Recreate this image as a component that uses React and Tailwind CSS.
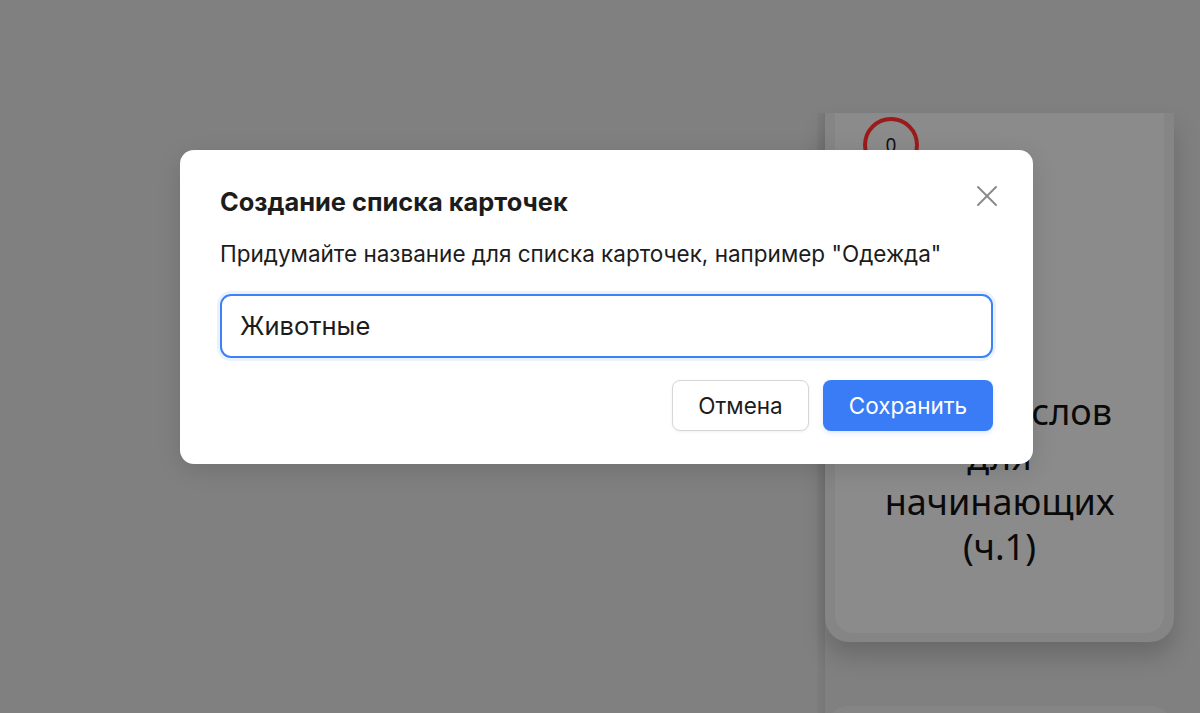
import React from 'react';

function CloseIcon() {
  return (
    <svg width="22" height="22" viewBox="0 0 22 22" fill="none" stroke="#8a8a8a" strokeWidth="2" strokeLinecap="round">
      <line x1="2" y1="2" x2="20" y2="20" />
      <line x1="20" y1="2" x2="2" y2="20" />
    </svg>
  );
}

function BackgroundCard() {
  return (
    <div className="shrink-0 w-[349px] h-[529px] bg-[#858585] rounded-b-[24px] px-[10px] pb-[9px] shadow-[0_14px_24px_rgba(0,0,0,0.18)]">
      <div className="h-full bg-[#8b8b8b] rounded-b-[18px] flex flex-col">
        <div className="pl-[28px] pt-[4px]">
          <div className="w-[56px] h-[56px] rounded-full border-[4px] border-[#9a1b1b] flex items-center justify-center text-[19px] text-[#111] font-['Noto_Sans',sans-serif]">
            0
          </div>
        </div>
        <div className="mt-[216px] text-center text-[36px] leading-[45px] text-[#0a0a0a] font-['Noto_Sans',sans-serif]">
          Топ-100 слов
          <br />
          для
          <br />
          начинающих
          <br />
          (ч.1)
        </div>
      </div>
    </div>
  );
}

export default function App() {
  return (
    <div className="relative w-full h-[713px] overflow-hidden bg-[#808080] font-['Inter',sans-serif]">
      {/* page behind the overlay */}
      <div className="flex h-full">
        <div className="flex-1" />
        <div className="w-[383px] pt-[113px] flex">
          <div className="w-[8px] h-full bg-gradient-to-r from-[#7d7d7d] to-[#777777]" />
          <div className="flex flex-col gap-[64px]">
            <BackgroundCard />
            <div className="shrink-0 w-[349px] h-[40px] bg-[#858585] rounded-t-[24px] px-[10px] pt-[9px]">
              <div className="h-full bg-[#8b8b8b] rounded-t-[18px]" />
            </div>
          </div>
        </div>
      </div>

      {/* modal */}
      <div className="absolute left-[180px] top-[150px] w-[853px] bg-white rounded-[14px] px-[40px] pt-[36px] pb-[33px] shadow-[0_6px_24px_rgba(0,0,0,0.12)]">
        <div className="flex items-start justify-between">
          <h2 className="text-[25.4px] leading-[32px] font-bold text-[#1c1c1c]">Создание списка карточек</h2>
          <button className="mt-[-1px] mr-[-5px]">
            <CloseIcon />
          </button>
        </div>
        <p className="mt-[21px] text-[22.5px] leading-[30px] text-[#1c1c1c]">
          Придумайте название для списка карточек, например "Одежда"
        </p>
        <div className="mt-[25px] h-[64px] rounded-[11px] border-2 border-[#3b82f6] ring-[3px] ring-[#3b82f6]/10 flex items-center px-[18px]">
          <span className="text-[25.5px] text-[#1c1c1c]">Животные</span>
        </div>
        <div className="mt-[22px] flex justify-end gap-[14px]">
          <button className="w-[137px] h-[51px] rounded-[8px] border border-[#d6d6d6] bg-white text-[22.5px] text-[#1c1c1c] shadow-[0_1px_3px_rgba(0,0,0,0.06)]">
            Отмена
          </button>
          <button className="w-[170px] h-[51px] rounded-[8px] bg-[#3a7bf6] text-[22.5px] text-white shadow-[0_2px_5px_rgba(59,130,246,0.18)]">
            Сохранить
          </button>
        </div>
      </div>
    </div>
  );
}
